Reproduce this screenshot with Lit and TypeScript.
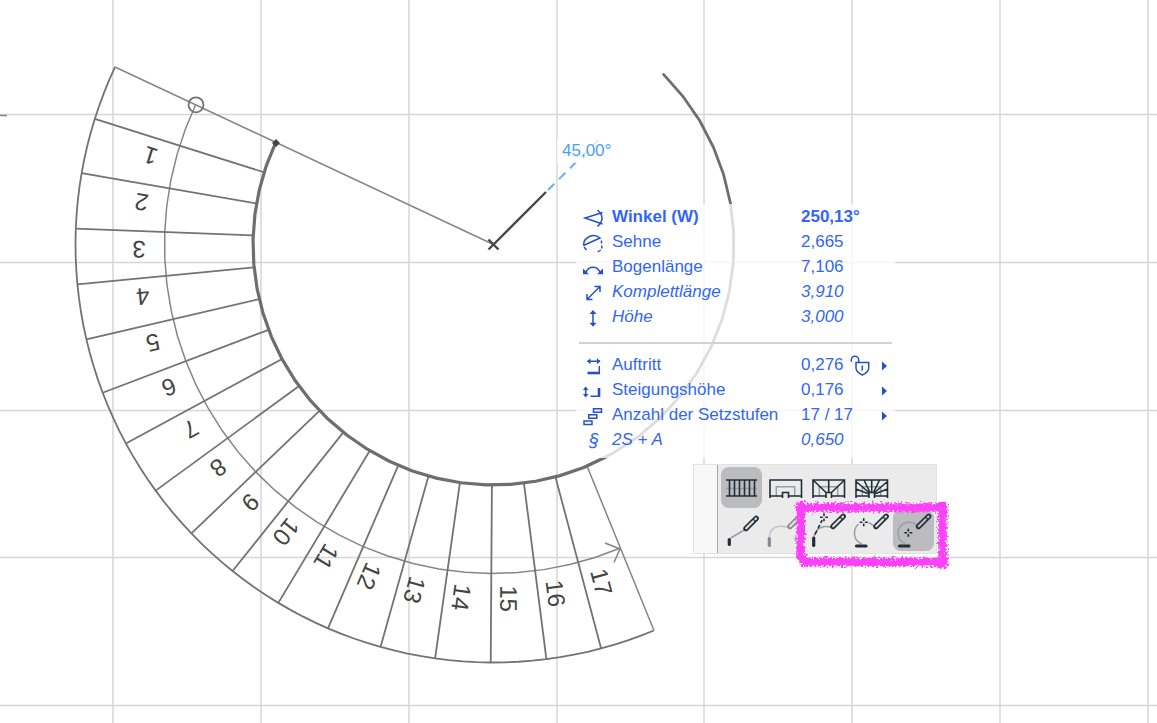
import { LitElement, html, svg, css, nothing } from "lit";
import { customElement } from "lit/decorators.js";
import { classMap } from "lit/directives/class-map.js";

const CX = 493.5;
const CY = 244.5;
const R_OUTER = 418;
const R_WALK = 329;
const R_INNER = 240.5;
const START = 205.13;
const STEP = 7.65;
const TREADS = 18;

const polar = (r: number, deg: number) => {
  const a = (deg * Math.PI) / 180;
  return [CX + r * Math.cos(a), CY + r * Math.sin(a)];
};

const points = (r: number, from: number, to: number, n: number) =>
  Array.from({ length: n + 1 }, (_, i) =>
    polar(r, from + ((to - from) * i) / n).map((v) => v.toFixed(2)).join(","),
  ).join(" ");

@customElement("stair-drawing")
class StairDrawing extends LitElement {
  static styles = css`
    :host { display: block; }
    .plan { display: block; width: 100%; height: 100%; overflow: hidden; }
    .grid { stroke: #d6d6d6; stroke-width: 1.5; }
    .edge { stroke: #737373; stroke-width: 1.8; fill: none; stroke-linejoin: round; }
    .thin { stroke: #858585; stroke-width: 1.5; fill: none; }
    .inner { stroke: #6e6e6e; stroke-width: 3.2; fill: none; stroke-linecap: round; }
    .rest { stroke: #6e6e6e; stroke-width: 2.8; fill: none; stroke-linecap: round; }
    .dark { stroke: #484848; stroke-width: 2.4; fill: none; }
    .guide { stroke: #6ab0f8; stroke-width: 2; stroke-dasharray: 9 6.5; }
    .node { fill: #444; }
    .num { font: 24px "Liberation Sans", Arial, sans-serif; fill: #444; text-anchor: middle; }
  `;

  render() {
    const end = START - STEP * TREADS;
    const cols = Array.from({ length: 20 }, (_, i) => 113 + Math.round(i * 147.85));
    const rows = Array.from({ length: 12 }, (_, i) => 114.5 + Math.round(i * 147.8));
    const cuts = Array.from({ length: TREADS - 1 }, (_, i) => i + 1);
    return html`<svg class="plan" role="img" aria-label="Treppe">
      ${cols.map((x) => svg`<line class="grid" x1=${x} x2=${x} y1="0" y2="100%" />`)}
      ${rows.map((y) => svg`<line class="grid" y1=${y} y2=${y} x1="0" x2="100%" />`)}
      <path class="thin" d="M0 115.500H7" />
      <polyline class="edge" points=${points(R_OUTER, START, end, 72)} />
      <polyline class="thin" points=${points(R_WALK, START, end, 30)} />
      ${cuts.map((n) => {
        const a = START - STEP * n;
        const [x1, y1] = polar(R_OUTER, a);
        const [x2, y2] = polar(R_INNER, a);
        return svg`
          <line class="edge" x1=${x1} y1=${y1} x2=${x2} y2=${y2} />
          <text class="num" transform="translate(${CX} ${CY}) rotate(${a})" x="354" y=${n < 10 ? -10 : -9}>${n}</text>`;
      })}
      <path class="thin" d="M115 67L493.5 244.5M587 466L654 630.5" />
      <path class="thin" d="M605 543L620 549L614 562.500" />
      <polyline class="rest" points=${points(R_INNER, -45, end, 16)} />
      <polyline class="inner" points=${points(R_INNER, 62, START, 24)} />
      <circle class="edge" cx="196" cy="104.800" r="7.500" />
      <path class="node" d="M276 139l4 4-4 4-4-4z" />
      <path class="guide" d="M548 190L600 138.500" />
      <path class="dark" d="M498 240L546 192M488.500 239.500l10 10M498.500 239.500l-10 10" />
    </svg>`;
  }
}

const glyphs = {
  angle: svg`<path d="M20.500 8.500L3 14L20.500 20M15.500 6Q24.500 14 15.500 22.500" />`,
  chord: svg`<path d="M1.500 16.500A10 10 0 0 1 18 9L1.500 16.500M2 18l2.500 3M19.500 11.500v3M19.800 16.500v3M18.800 21l-3 2" />`,
  arc: svg`<path d="M4 18C7 11.500 15 11.500 18 18" /><path class="solid" d="M1 14.500V20.200H7zM21 14.500V20.200H15z" />`,
  diagonal: svg`<path d="M5 20.500L18 7.500M12.500 7.500H18V13M5 15V20.500H10.500" />`,
  height: svg`<path d="M11 8V21" /><path class="solid" d="M11 6l3.500 4h-7zM11 22.800l3.500-4h-7z" />`,
  tread: svg`<path d="M5.500 9.300H18M17.300 14V21" /><path d="M5.500 21H18" stroke-width="2.600" /><path class="solid" d="M5 9.300l3.500-3v6zM18.500 9.300l-3.500-3v6z" />`,
  riser: svg`<path d="M3.700 11V19M8.500 19.300H18" /><path d="M17 11V20" stroke-width="2.600" /><path class="solid" d="M3.700 9.500l2.800 3.500h-5.600zM3.700 20.500l2.800-3.500h-5.600z" />`,
  count: svg`<path d="M11.500 6.700h8v3.500h-8zM6.800 12.800h8v3.500h-8zM2 19h8v3.500h-8z" />`,
  rule: svg`<text class="para" x="12" y="19">§</text>`,
};

interface Row {
  icon: keyof typeof glyphs;
  label: string;
  value: string;
  kind?: "active" | "derived";
  lock?: boolean;
  menu?: boolean;
}

const GROUPS: Row[][] = [
  [
    { icon: "angle", label: "Winkel (W)", value: "250,13°", kind: "active" },
    { icon: "chord", label: "Sehne", value: "2,665" },
    { icon: "arc", label: "Bogenlänge", value: "7,106" },
    { icon: "diagonal", label: "Komplettlänge", value: "3,910", kind: "derived" },
    { icon: "height", label: "Höhe", value: "3,000", kind: "derived" },
  ],
  [
    { icon: "tread", label: "Auftritt", value: "0,276", lock: true, menu: true },
    { icon: "riser", label: "Steigungshöhe", value: "0,176", menu: true },
    { icon: "count", label: "Anzahl der Setzstufen", value: "17 / 17", menu: true },
    { icon: "rule", label: "2S + A", value: "0,650", kind: "derived" },
  ],
];

@customElement("stair-tracker")
class StairTracker extends LitElement {
  static styles = css`
    :host {
      display: block;
      box-sizing: border-box;
      padding: 0 3px 6px;
      background: rgba(255, 255, 255, 0.77);
      color: #3366f5;
      font: 17px/25px "Liberation Sans", Arial, sans-serif;
    }
    table { border-collapse: collapse; }
    .second { margin-top: 13px; padding-top: 8px; border-top: 2px solid #d2d2d2; }
    tr { height: 25px; }
    th, td { padding: 0; text-align: left; font-weight: normal; white-space: nowrap; }
    .icon { width: 30px; padding-left: 3px; }
    .label { width: 189px; }
    .value { width: 81px; }
    .more { width: 10px; }
    .active .label, .active .value { font-weight: bold; }
    .derived .label, .derived .value { font-style: italic; }
    svg { display: block; fill: none; stroke: #2450cc; stroke-width: 1.5; }
    .solid { fill: #2450cc; stroke: none; }
    .para { font: italic 18px "Liberation Sans", Arial, sans-serif; fill: #3366f5; stroke: none; text-anchor: middle; }
    .cell { display: flex; align-items: center; gap: 6px; }
    button { display: block; padding: 0; border: 0; background: none; cursor: pointer; }
  `;

  private row(r: Row) {
    return html`<tr class=${r.kind ?? nothing}>
      <td class="icon"><svg width="22" height="25" viewBox="0 0 22 25" aria-hidden="true">${glyphs[r.icon]}</svg></td>
      <th class="label" scope="row">${r.label}</th>
      <td class="value"><div class="cell">${r.value}${r.lock
        ? html`<button aria-label="Auftritt sperren"><svg width="20" height="22" viewBox="0 -1 20 22">
            <path d="M1.300 6.800V5a3.700 3.700 0 0 1 7.400 0V7.500M6 7.500H18.700V13Q18.700 17 12.300 20Q6 17 6 13ZM12.300 10.500v5" />
          </svg></button>`
        : nothing}</div></td>
      <td class="more">${r.menu
        ? html`<button aria-label=${`Optionen ${r.label}`}><svg width="6" height="14" viewBox="0 0 6 14">
            <path class="solid" d="M0 3.500L5 8L0 12.500z" />
          </svg></button>`
        : nothing}</td>
    </tr>`;
  }

  render() {
    return GROUPS.map((g, i) => html`
      <div class=${i ? "second" : "first"}><table><tbody>${g.map((r) => this.row(r))}</tbody></table></div>`);
  }
}

const pen = (x: number, y: number) => svg`
  <path class="pen" d="M${x} ${y}l10.200-10.200" />
  <path class="core" d="M${x + 0.2} ${y - 0.2}l7-7M${x + 9.4} ${y - 9.4}l.6-.6" />`;

const cross = (x: number, y: number) => svg`
  <path d="M${x - 4} ${y}h2.800M${x + 1.2} ${y}h2.800M${x} ${y - 4}v2.800M${x} ${y + 1.2}v2.800" />`;

const tools = [
  {
    name: "Gerade",
    on: true,
    art: svg`<path class="soft" d="M5 21.500H36" /><path d="M5 13H36M5 29H36M8.500 13v16M13.500 13v16M18.500 13v16M23.500 13v16M28.500 13v16M33.500 13v16" />`,
  },
  {
    name: "Podest",
    art: svg`<path class="soft" d="M12.300 29V19.700H30.700V29" /><path d="M6 31V13H37.500V31M6 29H18.500V25.500H24.500V29H37.500M18.500 29v2M24.500 29v2" />`,
  },
  {
    name: "Wendel",
    art: svg`<path class="soft" d="M12.300 29V19.700H30.700V29" /><path d="M6 31V13H37.500V31M6 29H19V25.500H24.500V29H37.500M19 29v2M24.500 29v2M6 13L19 25.500M37.500 13L24.500 25.500M21.700 13V25.500" />`,
  },
  {
    name: "Verzogen",
    art: svg`<path class="soft" d="M12.300 29V19.700H30.700V29" /><path d="M6 31V13H37.500V31M6 29H19V25.500H24.500V29H37.500M19 29v2M24.500 29v2M6 22L19 27M6 14.500L19 25.500M14 13L20 25.500M21.700 13V25.500M29.500 13L23.500 25.500M37.500 14.500L24.500 25.500M37.500 22L24.500 27" />`,
  },
  null,
  {
    name: "Linie",
    art: svg`<path class="soft" d="M9.700 28L24 19.500" /><path class="bar" d="M8.300 29.500V34.500" />${pen(25, 18.500)}`,
  },
  {
    name: "Tangentialer Bogen",
    off: true,
    art: svg`<path class="soft" d="M5.300 28C5.300 17 14 14.500 24.500 17.500" /><path class="bar" d="M5.300 28.500V35.500" />${pen(26, 16.500)}`,
  },
  {
    name: "Bogen über Tangente",
    art: svg`<path class="soft" d="M7 27.500C8 19 15 14.500 24.500 17.500" /><path class="bar" d="M6.700 28V35.500" /><path d="M8 24.500l2-4M11 18.500l1.800-3.700M13.700 13l1.500-2.800" />${cross(17, 7.3)}${pen(26, 16.500)}`,
  },
  {
    name: "Bogen über Mittelpunkt",
    art: svg`<path class="soft" d="M8.700 13.800C2 20 3.500 31 12 34M18.500 12.700Q21 13.500 23.500 15.800" /><path class="bar" d="M6.500 36H16" />${cross(13.7, 12.3)}${pen(26, 16.500)}`,
  },
  {
    name: "Bogen über Zentrum",
    on: true,
    art: svg`<path class="soft" d="M12 33.500A11 11 0 1 1 25 17" /><path class="bar" d="M6.500 36H16" />${cross(15.3, 22.7)}${pen(25.500, 16.500)}`,
  },
];

@customElement("tool-palette")
class ToolPalette extends LitElement {
  static styles = css`
    :host {
      display: flex;
      background: #ebebeb;
      border: 1px solid #e2e2e2;
    }
    .grip { width: 23px; background: #f8f8f8; border-right: 1px solid #a6a6a6; }
    .tools {
      display: grid;
      grid-template-columns: repeat(5, 41px);
      gap: 2px;
      padding: 2px 2px 2px 3px;
    }
    button { padding: 0; border: 0; border-radius: 8px; background: none; height: 41px; cursor: pointer; }
    .on { background: #bcbbc0; }
    .off { opacity: 0.5; }
    svg { display: block; fill: none; stroke: #1f2f38; stroke-width: 1.6; }
    .soft { stroke: #9a9ea2; stroke-width: 1.5; }
    .bar { stroke-width: 3.2; stroke-linecap: round; }
    .pen { stroke-width: 5.4; stroke-linecap: round; }
    .core { stroke: #dcdddf; stroke-width: 2.2; stroke-linecap: round; }
    .on .core { stroke: #bcbbc0; }
  `;

  render() {
    return html`<div class="grip"></div>
      <div class="tools" role="toolbar" aria-label="Treppengeometrie">
        ${tools.map((t) => t
          ? html`<button class=${classMap({ on: !!t.on, off: !!t.off })} aria-label=${t.name} aria-pressed=${t.on ? "true" : "false"}>
              <svg width="41" height="41" viewBox="0 0 41 41">${t.art}</svg>
            </button>`
          : html`<span></span>`)}
      </div>`;
  }
}

@customElement("app-root")
class AppRoot extends LitElement {
  static styles = css`
    :host { display: block; position: relative; height: 100vh; overflow: hidden; background: #fff; }
    stair-drawing { height: 100%; }
    .hint {
      position: absolute; left: 557px; top: 139px; padding: 0 5px;
      background: rgba(255, 255, 255, 0.75); color: #4ba0f5;
      font: 17px/24px "Liberation Sans", Arial, sans-serif;
    }
    .tracker { position: absolute; left: 576px; top: 204px; }
    .palette { position: absolute; left: 693px; top: 464px; }
    .marker { position: absolute; left: 788px; top: 496px; pointer-events: none; }
  `;

  render() {
    return html`<stair-drawing></stair-drawing>
      <div class="hint">45,00°</div>
      <stair-tracker class="tracker"></stair-tracker>
      <tool-palette class="palette"></tool-palette>
      <svg class="marker" width="168" height="78" viewBox="0 0 168 78" aria-hidden="true">
        <defs>
          <filter id="crayon" x="-10%" y="-10%" width="120%" height="120%">
            <feTurbulence type="fractalNoise" baseFrequency="0.45" numOctaves="2" seed="4" result="n" />
            <feDisplacementMap in="SourceGraphic" in2="n" scale="9" xChannelSelector="R" yChannelSelector="G" />
          </filter>
        </defs>
        <path d="M12 11.500H155M154.500 10V68M156 66H17M13 10L12.500 60L19 66" fill="none" stroke="#ff40fb" stroke-width="8.500" stroke-linecap="square" filter="url(#crayon)" />
      </svg>`;
  }
}
